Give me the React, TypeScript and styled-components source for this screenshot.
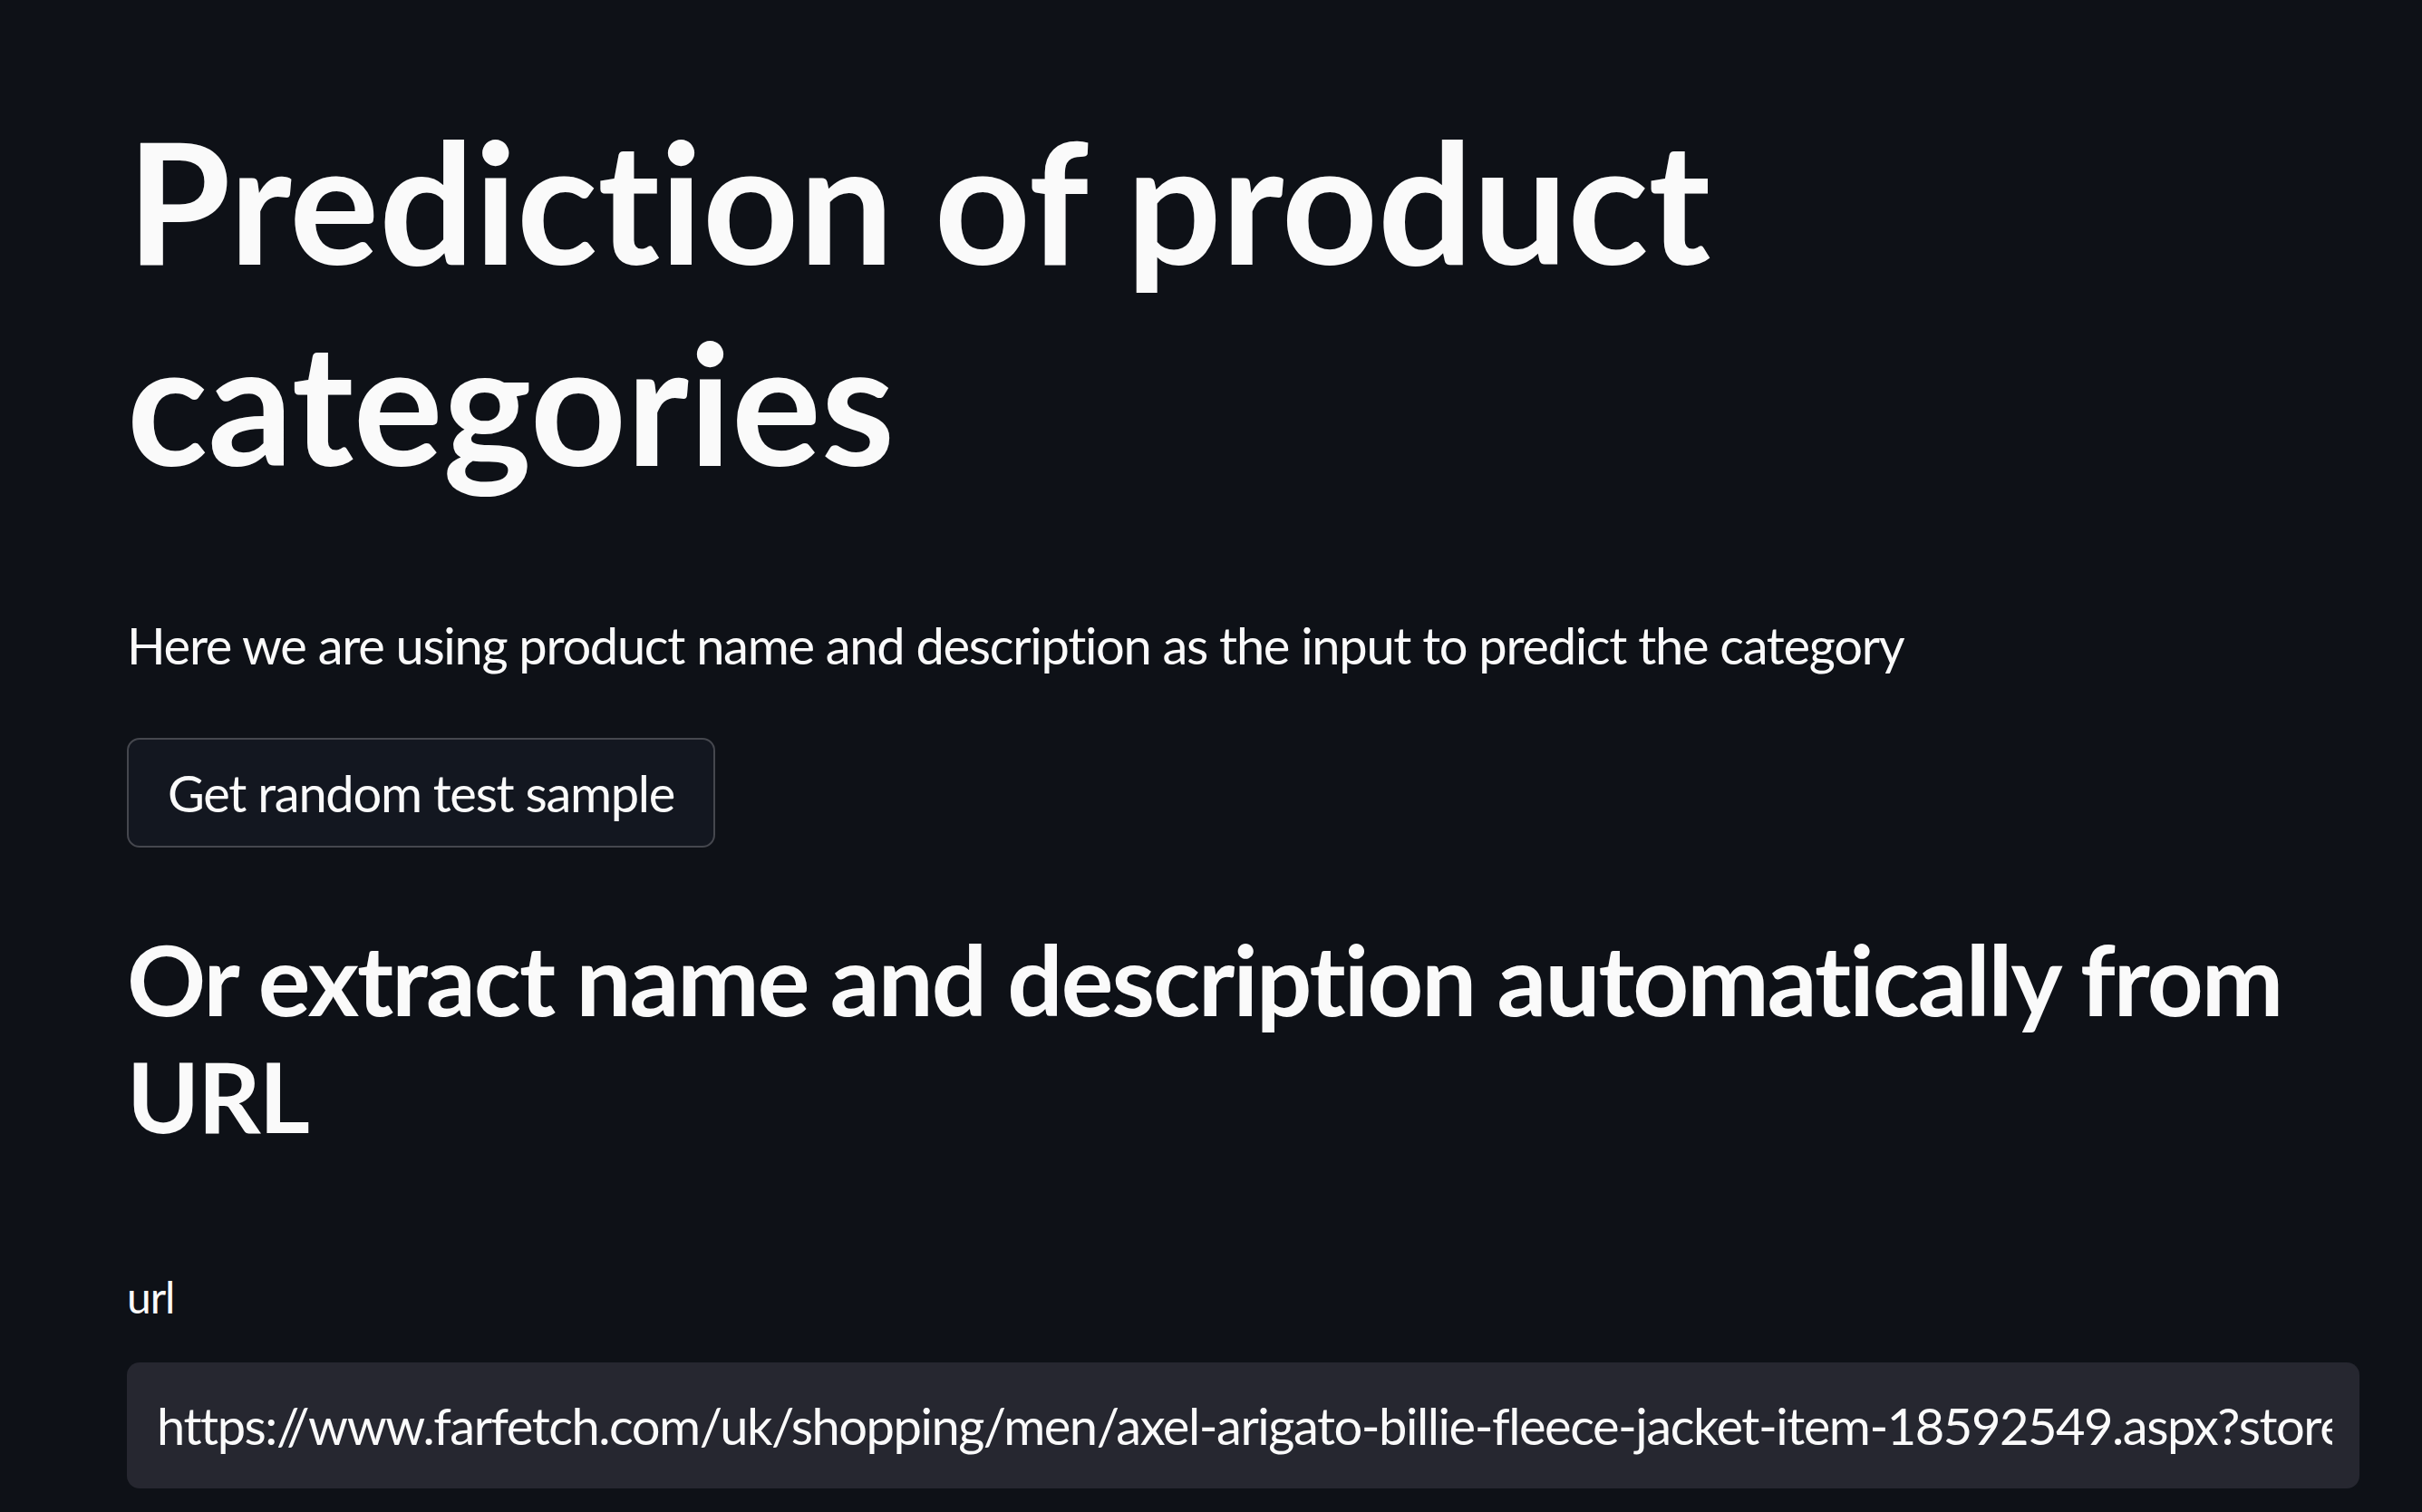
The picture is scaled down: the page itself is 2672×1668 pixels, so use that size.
import styled, { createGlobalStyle } from "styled-components"

const GlobalStyle = createGlobalStyle`
  html, body {
    margin: 0;
    padding: 0;
    background: #0e1117;
  }
  body {
    font-family: Lato, "Open Sans", sans-serif;
    font-variant-ligatures: none;
    color: #fafafa;
  }
`

const Page = styled.main`
  min-height: 1668px;
  background: #0e1117;
  padding: 109px 69px 0 140px;
  box-sizing: border-box;
  display: flex;
  flex-direction: column;
`

const Title = styled.h1`
  margin: 0;
  font-size: 185px;
  font-weight: 700;
  line-height: 1.2;
`

const Paragraph = styled.p`
  margin: 114px 0 0;
  font-size: 56px;
  line-height: 1.6;
  letter-spacing: -0.023em;
`

const Button = styled.button`
  margin-top: 57px;
  align-self: flex-start;
  height: 121px;
  padding: 0 43px;
  background: #131720;
  color: #fafafa;
  border: 2.5px solid #45474e;
  border-radius: 14px;
  font-family: inherit;
  font-variant-ligatures: none;
  font-size: 56px;
  letter-spacing: -0.023em;
  cursor: pointer;
`

const SubTitle = styled.h2`
  margin: 80px 0 0;
  font-size: 108px;
  font-weight: 700;
  line-height: 1.2;
  letter-spacing: -0.018em;
`

const Label = styled.label`
  margin-top: 119px;
  font-size: 48px;
  line-height: 1.6;
  letter-spacing: -0.023em;
`

const Input = styled.input`
  margin-top: 33px;
  height: 139px;
  padding: 0 30px 0 33px;
  box-sizing: border-box;
  width: 100%;
  background: #262730;
  color: #fafafa;
  border: none;
  border-radius: 14px;
  font-family: inherit;
  font-variant-ligatures: none;
  font-size: 56px;
  letter-spacing: -0.026em;
  outline: none;
`

export default function App() {
  return (
    <>
      <GlobalStyle />
      <Page>
        <Title>Prediction of product categories</Title>
        <Paragraph>
          Here we are using product name and description as the input to predict the category
        </Paragraph>
        <Button>Get random test sample</Button>
        <SubTitle>Or extract name and description automatically from URL</SubTitle>
        <Label htmlFor="url">url</Label>
        <Input
          id="url"
          readOnly
          defaultValue="https://www.farfetch.com/uk/shopping/men/axel-arigato-billie-fleece-jacket-item-18592549.aspx?storeid=9359"
        />
      </Page>
    </>
  )
}
